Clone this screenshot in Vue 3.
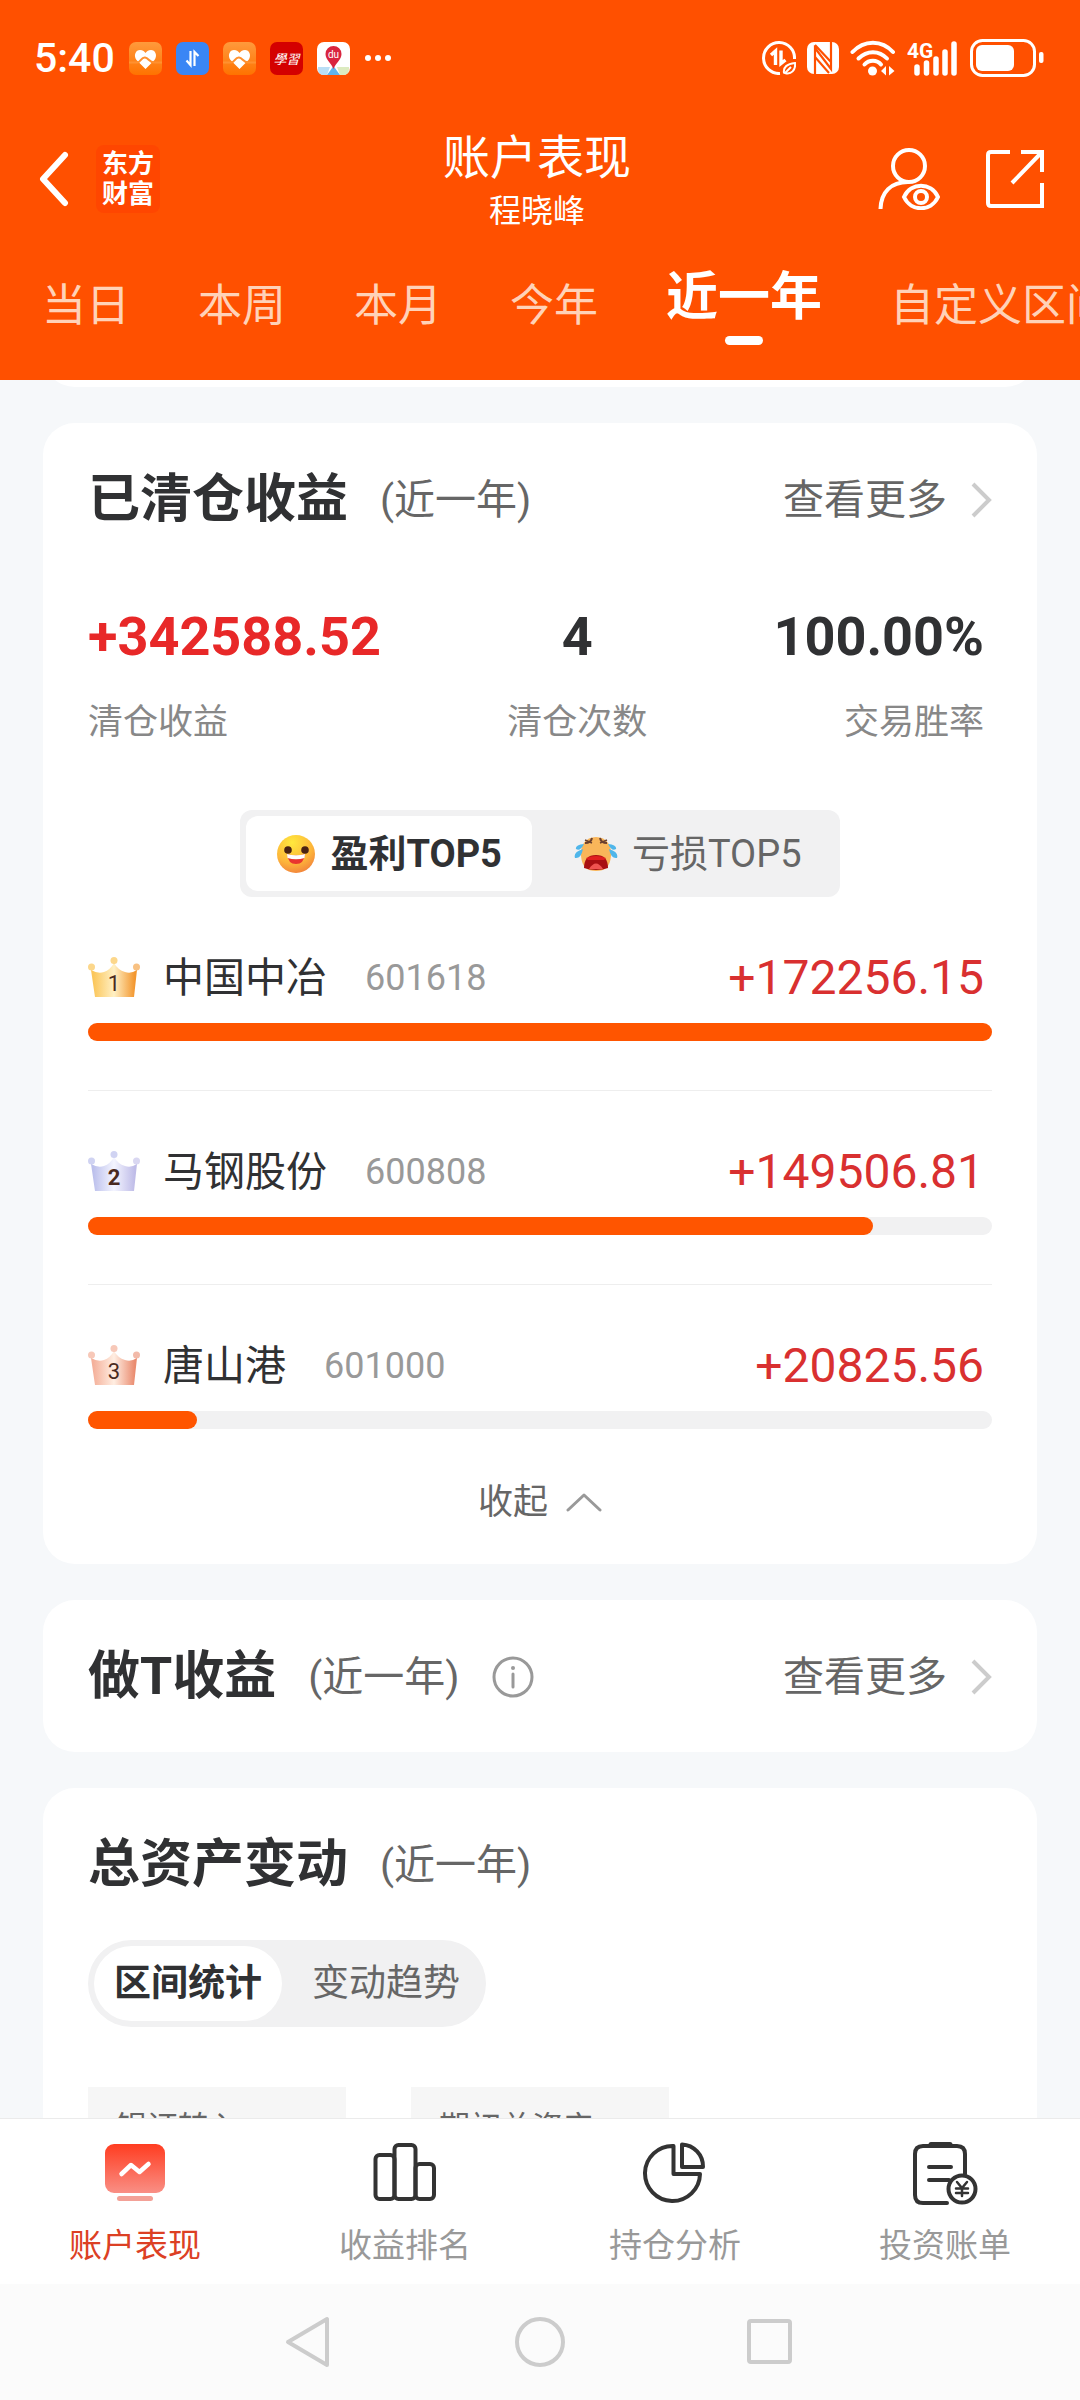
<script setup>

import {computed, ref} from "vue";

const ranges = ["当日", "本周", "本月", "今年", "近一年", "自定义区间"];
const currentRange = ref(4); // Index

const topTab = ref("win"); // win or lose
const assetTab = ref("stat"); // stat or trend

const summary = [
  {label: "清仓收益", value: "+342588.52", type: "up"},
  {label: "清仓次数", value: "4", type: ""},
  {label: "交易胜率", value: "100.00%", type: ""},
]

const stocks = [
  {
    name: "中国中冶",
    code: "601618",
    profit: 172256.15,
    colors: ["#fbc65a", "#fff0c4", "#f3972f"],
    bold: false,
  },
  {
    name: "马钢股份",
    code: "600808",
    profit: 149506.81,
    colors: ["#bcc0ec", "#f4f5ff", "#bfbce8"],
    bold: true,
  },
  {
    name: "唐山港",
    code: "601000",
    profit: 20825.56,
    colors: ["#f4b09a", "#ffeee2", "#ea8c70"],
    bold: false,
  },
]

// Bars are drawn relative to the best stock
const maxProfit = computed(() => Math.max(...stocks.map((s) => s.profit)));

const barWidth = (profit) => (profit / maxProfit.value * 100).toFixed(2) + "%";

const assets = ["银证转入", "期初总资产"];

const pages = ["账户表现", "收益排名", "持仓分析", "投资账单"];
const currentPage = ref(0);

</script>

<template>
  <div class="app">
    <header class="header">
      <!-- Phone status bar -->
      <div class="status">
        <div class="status-left">
          <span class="clock">5:40</span>
          <svg class="app-icon" viewBox="0 0 33 33">
            <defs>
              <linearGradient id="health" x1="0" y1="0" x2="0" y2="1">
                <stop offset="0" stop-color="#ff9a3c"/>
                <stop offset="1" stop-color="#ff7200"/>
              </linearGradient>
            </defs>
            <rect width="33" height="33" rx="7" fill="url(#health)"/>
            <path d="M16.500 27 L7.500 18 C4 13 7 8 11 8 C14 8 15.500 9.500 16.500 11 C17.500 9.500 19 8 22 8 C26 8 29 13 25.500 18 Z" fill="#fff"/>
            <path d="M0 20.500 H8 C12 20.500 12 15 16 15.500 C20 16 20 21 26 20.500 H33" fill="none" stroke="#ff9130" stroke-width="2"/>
          </svg>
          <svg class="app-icon" viewBox="0 0 33 33">
            <rect width="33" height="33" rx="7" fill="#3a86f5"/>
            <path d="M14.500 9 V23 L10.500 18.500 M18.500 24 V10 L22.500 14" fill="none" stroke="#fff" stroke-width="2.200"/>
          </svg>
          <svg class="app-icon" viewBox="0 0 33 33">
            <rect width="33" height="33" rx="7" fill="url(#health)"/>
            <path d="M16.500 27 L7.500 18 C4 13 7 8 11 8 C14 8 15.500 9.500 16.500 11 C17.500 9.500 19 8 22 8 C26 8 29 13 25.500 18 Z" fill="#fff"/>
            <path d="M0 20.500 H8 C12 20.500 12 15 16 15.500 C20 16 20 21 26 20.500 H33" fill="none" stroke="#ff9130" stroke-width="2"/>
          </svg>
          <svg class="app-icon" viewBox="0 0 33 33">
            <rect width="33" height="33" rx="7" fill="#d40000"/>
            <text x="16.500" y="21.500" text-anchor="middle" class="study">學習</text>
          </svg>
          <svg class="app-icon" viewBox="0 0 33 33">
            <rect width="33" height="33" rx="7" fill="#fff"/>
            <path d="M1 25 H13 L10 33 H7 Q1 33 1 27 Z" fill="#b9def5"/>
            <path d="M20 25 H32 V27 Q32 33 26 33 H23 Z" fill="#dcebc0"/>
            <path d="M16.500 24 L23 33 H10 Z" fill="#5fb4ee"/>
            <path d="M16.500 27 C14.500 21 8.500 18 8.500 12 A8 8 0 0 1 24.500 12 C24.500 18 18.500 21 16.500 27 Z" fill="#d9253f"/>
            <text x="16.500" y="16" text-anchor="middle" class="du">du</text>
          </svg>
          <svg class="dots" viewBox="0 0 28 8">
            <circle cx="4" cy="4" r="3" fill="#fff"/>
            <circle cx="14" cy="4" r="3" fill="#fff"/>
            <circle cx="24" cy="4" r="3" fill="#fff"/>
          </svg>
        </div>
        <div class="status-right">
          <svg width="34" height="34" viewBox="0 0 34 34" fill="none" stroke="#fff">
            <path d="M18 32.500 A15.500 15.500 0 1 1 32.500 18" stroke-width="3"/>
            <path d="M9 14 L13.500 10 V24 M19 9.500 V22.500 L23.500 19" stroke-width="3.400"/>
            <path d="M22 32 C21 26 25 23 33 22 C34 29 29 34 23 32 L29 26" stroke-width="2"/>
          </svg>
          <svg width="32" height="32" viewBox="0 0 32 32">
            <rect width="32" height="32" rx="7" fill="#fff"/>
            <path d="M8 32 V6 L24 27 V0 M8 3 L24 20" fill="none" stroke="#ff5000" stroke-width="2.200"/>
            <path d="M8 15 L22 31" fill="none" stroke="#ff5000" stroke-width="2"/>
          </svg>
          <svg width="46" height="36" viewBox="0 0 46 36" fill="none" stroke="#fff" stroke-width="4" stroke-linecap="round">
            <path d="M2.500 12 C14 -0.500 32 -0.500 43 12"/>
            <path d="M8.500 18.500 C17 10 29 10 37 18.500"/>
            <path d="M14.500 24.500 C19 19.500 27 19.500 31 24.500"/>
            <circle cx="22.500" cy="31" r="4.500" fill="#fff" stroke="none"/>
            <path d="M31 31 L36 26 V35.500 Z M44.500 31 L39 26 V35.500 Z" fill="#fff" stroke="none"/>
          </svg>
          <svg width="52" height="36" viewBox="0 0 52 36">
            <text x="0" y="18" class="net">4G</text>
            <path d="M10 27 V33 M19.500 23 V33 M29 19 V33 M38 12 V33 M47 4 V33" stroke="#fff" stroke-width="5.500" stroke-linecap="round"/>
          </svg>
          <svg width="74" height="38" viewBox="0 0 74 38">
            <rect x="1.500" y="1.500" width="63" height="35" rx="11" fill="none" stroke="#fff" stroke-width="3"/>
            <rect x="6" y="6" width="38" height="26" rx="6" fill="#fff"/>
            <rect x="69" y="13" width="4.500" height="11" rx="2" fill="#fff"/>
          </svg>
        </div>
      </div>

      <!-- Title -->
      <div class="title-bar">
        <div class="title-left">
          <button class="icon-btn" aria-label="返回">
            <svg width="40" height="56" viewBox="0 0 40 56">
              <path d="M35 4 L13 28 L35 52" fill="none" stroke="#fff" stroke-width="6" stroke-linecap="round" stroke-linejoin="round"/>
            </svg>
          </button>
          <div class="logo">东方<br>财富</div>
        </div>
        <div class="title-center">
          <h1>账户表现</h1>
          <p>程晓峰</p>
        </div>
        <div class="title-right">
          <button class="icon-btn" aria-label="账户">
            <svg width="62" height="62" viewBox="0 0 62 62" fill="none" stroke="#fff" stroke-width="4">
              <circle cx="31" cy="18" r="16"/>
              <path d="M2.500 61 C3 44 13 34 30 34"/>
              <path d="M26 49 C33 34 53 34 60 49 C53 64 33 64 26 49 Z"/>
              <circle cx="43" cy="49" r="6"/>
            </svg>
          </button>
          <button class="icon-btn" aria-label="分享">
            <svg width="58" height="60" viewBox="0 0 58 60" fill="none" stroke="#fff" stroke-width="4">
              <path d="M24 3 H5 Q2 3 2 6 V54 Q2 57 5 57 H56 V34"/>
              <path d="M35 3 H56 V23 M55 4 L26 34"/>
            </svg>
          </button>
        </div>
      </div>

      <!-- Ranges -->
      <nav class="ranges">
        <button
            v-for="(range, index) in ranges"
            :key="range"
            :class="['range', {active: index === currentRange}]"
            @click="currentRange = index"
        >
          {{ range }}
        </button>
      </nav>
    </header>

    <main class="content">
      <div class="card previous"></div>

      <!-- Closed positions -->
      <section class="card closed">
        <div class="card-head">
          <h2>已清仓收益</h2>
          <span class="period">(近一年)</span>
          <a href="#" class="more">
            查看更多
            <svg width="22" height="36" viewBox="0 0 22 36">
              <path d="M3 2 L19 18 L3 34" fill="none" stroke="#ccc" stroke-width="4"/>
            </svg>
          </a>
        </div>

        <div class="summary">
          <div v-for="item in summary" :key="item.label" class="summary-item">
            <strong :class="item.type">{{ item.value }}</strong>
            <span>{{ item.label }}</span>
          </div>
        </div>

        <div class="switch">
          <button :class="{active: topTab === 'win'}" @click="topTab = 'win'">
            <svg width="40" height="40" viewBox="0 0 40 40">
              <defs>
                <radialGradient id="smile" cx="0.4" cy="0.2" r="0.9">
                  <stop offset="0" stop-color="#ffe83d"/>
                  <stop offset="0.600" stop-color="#fdb53a"/>
                  <stop offset="1" stop-color="#f0783c"/>
                </radialGradient>
              </defs>
              <circle cx="20" cy="20" r="19" fill="url(#smile)"/>
              <circle cx="12" cy="16" r="3.800" fill="#4a2212"/>
              <circle cx="29" cy="16" r="3.800" fill="#4a2212"/>
              <path d="M11 20 Q20 22.500 29 20 Q28 30 20 30 Q12 30 11 20 Z" fill="#e9352f"/>
              <path d="M11 20 Q20 22.500 29 20 L28.500 24 Q20 26.500 11.500 24 Z" fill="#fff"/>
            </svg>
            盈利TOP5
          </button>
          <button :class="{active: topTab === 'lose'}" @click="topTab = 'lose'">
            <svg width="44" height="40" viewBox="0 0 44 40">
              <path d="M22 3 C33 3 38 12 37 22 C36 33 31 37 22 37 C13 37 8 33 7 22 C6 12 11 3 22 3 Z" fill="#f9b65a"/>
              <path d="M11 9 Q17 9 18 4 M33 9 Q27 9 26 4" fill="none" stroke="#6b4030" stroke-width="2"/>
              <path d="M11 6 L18 9 M33 6 L26 9" stroke="#6b4030" stroke-width="1.500"/>
              <path d="M10 34 Q10 21 22 21 Q34 21 34 34 Q29 36 22 36 Q15 36 10 34 Z" fill="#a80f12"/>
              <path d="M12 24 Q22 20 32 24 L30 26 H14 Z" fill="#e01f1f"/>
              <path d="M15 35 Q22 24 29 35 Z" fill="#ef5350"/>
              <path d="M10 10 Q1 11 2 15 Q6 18 10 10 Z M9 15 Q-1 18 1 24 Q7 25 9 15 Z" fill="#4fb6ea"/>
              <path d="M34 10 Q43 11 42 15 Q38 18 34 10 Z M35 15 Q45 18 43 24 Q37 25 35 15 Z" fill="#4fb6ea"/>
            </svg>
            亏损TOP5
          </button>
        </div>

        <ul class="stocks">
          <li v-for="(stock, index) in stocks" :key="stock.code" class="stock">
            <div class="stock-info">
              <svg width="52" height="42" viewBox="0 0 52 42">
                <defs>
                  <linearGradient :id="'crown-' + index" x1="0" y1="0" x2="1" y2="0">
                    <stop offset="0.050" :stop-color="stock.colors[0]"/>
                    <stop offset="0.500" :stop-color="stock.colors[1]"/>
                    <stop offset="0.950" :stop-color="stock.colors[2]"/>
                  </linearGradient>
                </defs>
                <path d="M3 13 Q10 17 16 15 Q22 13 26 6 Q30 13 37 15 Q43 17 49 13 L46 40 H7 Z" :fill="`url(#crown-${index})`"/>
                <circle cx="3.500" cy="10" r="3.500" :fill="stock.colors[0]" opacity="0.700"/>
                <circle cx="26" cy="3.500" r="3.500" :fill="stock.colors[0]" opacity="0.700"/>
                <circle cx="48.500" cy="10" r="3.500" :fill="stock.colors[2]" opacity="0.600"/>
                <text x="26" y="34" text-anchor="middle" :class="['rank', {bold: stock.bold}]">{{ index + 1 }}</text>
              </svg>
              <span class="name">{{ stock.name }}</span>
              <span class="code">{{ stock.code }}</span>
              <span class="profit">+{{ stock.profit.toFixed(2) }}</span>
            </div>
            <div class="track">
              <div class="bar" :style="{width: barWidth(stock.profit)}"></div>
            </div>
          </li>
        </ul>

        <button class="collapse">
          收起
          <svg width="36" height="20" viewBox="0 0 36 20">
            <path d="M2 17 L18 2 L34 17" fill="none" stroke="#999" stroke-width="3" stroke-linecap="round" stroke-linejoin="round"/>
          </svg>
        </button>
      </section>

      <!-- Day trading -->
      <section class="card">
        <div class="card-head">
          <h2>做T收益</h2>
          <span class="period">(近一年)</span>
          <button class="icon-btn" aria-label="说明">
            <svg width="42" height="42" viewBox="0 0 42 42">
              <circle cx="21" cy="21" r="19" fill="none" stroke="#999" stroke-width="3"/>
              <circle cx="21" cy="12" r="2" fill="#999"/>
              <path d="M21 18 V31" stroke="#999" stroke-width="3" stroke-linecap="round"/>
            </svg>
          </button>
          <a href="#" class="more">
            查看更多
            <svg width="22" height="36" viewBox="0 0 22 36">
              <path d="M3 2 L19 18 L3 34" fill="none" stroke="#ccc" stroke-width="4"/>
            </svg>
          </a>
        </div>
      </section>

      <!-- Total assets -->
      <section class="card">
        <div class="card-head">
          <h2>总资产变动</h2>
          <span class="period">(近一年)</span>
        </div>
        <div class="switch round">
          <button :class="{active: assetTab === 'stat'}" @click="assetTab = 'stat'">区间统计</button>
          <button :class="{active: assetTab === 'trend'}" @click="assetTab = 'trend'">变动趋势</button>
        </div>
        <div class="boxes">
          <div v-for="asset in assets" :key="asset" class="box">{{ asset }}</div>
        </div>
      </section>
    </main>

    <!-- Pages -->
    <nav class="pages">
      <button
          v-for="(page, index) in pages"
          :key="page"
          :class="{active: index === currentPage}"
          @click="currentPage = index"
      >
        <svg v-if="index === 0" width="64" height="64" viewBox="0 0 64 64">
          <defs>
            <linearGradient id="screen" x1="0" y1="0" x2="0" y2="1">
              <stop offset="0" stop-color="#ff3c20"/>
              <stop offset="1" stop-color="#f98f85"/>
            </linearGradient>
          </defs>
          <rect x="2" y="3" width="60" height="49" rx="9" fill="url(#screen)"/>
          <rect x="14" y="55" width="36" height="5" rx="2.500" fill="#f3a197"/>
          <path d="M18.500 33 L28 24 L36.500 31 L45.500 23" fill="none" stroke="#fff" stroke-width="4.500" stroke-linecap="round" stroke-linejoin="round"/>
        </svg>
        <svg v-if="index === 1" width="64" height="64" viewBox="0 0 64 64" fill="none" stroke="#333" stroke-width="4">
          <rect x="2.500" y="14" width="19" height="44" rx="4"/>
          <rect x="21.500" y="4" width="21" height="54" rx="4"/>
          <rect x="42.500" y="23" width="18.500" height="35" rx="4"/>
        </svg>
        <svg v-if="index === 2" width="64" height="64" viewBox="0 0 64 64" fill="none" stroke="#333" stroke-width="4" stroke-linejoin="round">
          <path d="M30.500 5 A27.500 27.500 0 1 0 57 33 H30.500 Z"/>
          <path d="M39 3.500 A22 22 0 0 1 60 26 H39 Z"/>
        </svg>
        <svg v-if="index === 3" width="68" height="64" viewBox="0 0 68 64" fill="none" stroke="#333" stroke-width="4" stroke-linecap="round">
          <path d="M36 62 H12 Q4 62 4 54 V13 Q4 5 12 5 H46 Q54 5 54 13 V33"/>
          <path d="M20 3.500 H39" stroke-width="5"/>
          <path d="M18 26 H40 M18 39 H38"/>
          <circle cx="51" cy="48" r="13.500"/>
          <path d="M46 41 L51 47 L56 41 M51 47 V55 M45 47.500 H57 M45 52 H57" stroke-width="2.500"/>
        </svg>
        <span>{{ page }}</span>
      </button>
    </nav>

    <!-- Phone navigation -->
    <div class="system">
      <button class="icon-btn" aria-label="后退">
        <svg width="50" height="52" viewBox="0 0 50 52">
          <path d="M42 3 V49 L3 26 Z" fill="none" stroke="#ccc" stroke-width="4" stroke-linejoin="round"/>
        </svg>
      </button>
      <button class="icon-btn" aria-label="主屏幕">
        <svg width="50" height="52" viewBox="0 0 50 52">
          <circle cx="25" cy="26" r="23" fill="none" stroke="#ccc" stroke-width="4"/>
        </svg>
      </button>
      <button class="icon-btn" aria-label="最近任务">
        <svg width="50" height="52" viewBox="0 0 50 52">
          <rect x="4" y="5" width="41" height="41" rx="2" fill="none" stroke="#ccc" stroke-width="4"/>
        </svg>
      </button>
    </div>
  </div>
</template>

<style>
body {
  margin: 0;
  background: #f6f8fa;
}
</style>

<style scoped>
.app {
  display: flex;
  flex-direction: column;
  height: 100vh;
  color: #303133;
  font-family: Roboto, "Noto Sans CJK SC", sans-serif;
}

h1, h2, p, ul {
  margin: 0;
  padding: 0;
}

button {
  padding: 0;
  border: none;
  background: none;
  color: inherit;
  font-family: inherit;
  cursor: pointer;
}

svg {
  display: block;
  flex: none;
}

.icon-btn {
  display: flex;
}

/* Header */
.header {
  flex: none;
  background: #ff5000;
  color: #fff;
}

.status {
  display: flex;
  justify-content: space-between;
  align-items: center;
  height: 116px;
  padding: 0 36px 0 34px;
}

.status-left {
  display: flex;
  align-items: center;
  gap: 14px;
}

.status-right {
  display: flex;
  align-items: center;
  gap: 11px;
}

.clock {
  font-size: 41px;
  font-weight: 500;
  line-height: 48px;
}

.app-icon {
  width: 33px;
  height: 33px;
}

.study {
  fill: #fff;
  font-size: 13px;
  font-style: italic;
}

.du {
  fill: #fff;
  font-size: 10px;
}

.dots {
  width: 28px;
}

.net {
  fill: #fff;
  font-size: 21px;
  font-weight: 700;
}

.title-bar {
  display: grid;
  grid-template-columns: 1fr auto 1fr;
  align-items: center;
  height: 126px;
  padding: 0 36px 0 30px;
}

.title-left {
  display: flex;
  align-items: center;
  gap: 26px;
}

.logo {
  padding: 4px 6px;
  border-radius: 8px;
  background: #ff4600;
  font-size: 26px;
  font-weight: 700;
  line-height: 30px;
}

.title-center {
  display: flex;
  flex-direction: column;
  gap: 6px;
  text-align: center;
}

.title-center h1 {
  font-size: 47px;
  font-weight: 400;
  line-height: 58px;
}

.title-center p {
  font-size: 32px;
  line-height: 36px;
}

.title-right {
  display: flex;
  justify-content: flex-end;
  align-items: center;
  gap: 46px;
}

.ranges {
  display: flex;
  align-items: flex-start;
  gap: 68px;
  height: 112px;
  padding: 26px 0 0 42px;
  overflow: hidden;
}

.range {
  flex: none;
  padding-top: 8px;
  color: #ffd2b8;
  font-size: 44px;
  line-height: 60px;
}

.range.active {
  padding-top: 0;
  color: #fff;
  font-size: 52px;
  font-weight: 700;
}

.range.active::after {
  content: "";
  display: block;
  width: 38px;
  height: 9px;
  margin: 8px auto 0;
  border-radius: 5px;
  background: #fff;
}

/* Content */
.content {
  display: flex;
  flex-direction: column;
  flex: 1;
  gap: 36px;
  min-height: 0;
  padding: 0 43px;
  overflow: hidden;
  background: #f6f8fa;
}

.card {
  flex: none;
  padding: 0 45px;
  border-radius: 32px;
  background: #fff;
}

.previous {
  height: 80px;
  margin-top: -73px;
}

.card-head {
  display: flex;
  align-items: center;
  gap: 32px;
  padding: 47px 0 45px;
  line-height: 60px;
}

.card-head h2 {
  font-size: 52px;
}

.period {
  color: #666;
  font-size: 41px;
}

.more {
  display: flex;
  align-items: center;
  gap: 23px;
  margin-left: auto;
  color: #666;
  font-size: 41px;
  text-decoration: none;
}

.closed {
  padding-bottom: 36px;
}

.summary {
  display: flex;
  justify-content: space-between;
  margin: 32px 8px 65px 0;
}

.summary-item {
  display: flex;
  flex-direction: column;
  align-items: center;
  gap: 34px;
}

.summary-item:first-child {
  align-items: flex-start;
}

.summary-item:last-child {
  align-items: flex-end;
}

.summary-item strong {
  font-size: 54px;
  line-height: 60px;
}

.summary-item .up {
  color: #e82828;
}

.summary-item span {
  color: #888;
  font-size: 35px;
  line-height: 44px;
}

.switch {
  display: flex;
  gap: 10px;
  width: fit-content;
  margin: 0 auto;
  padding: 6px;
  border-radius: 12px;
  background: #f1f1f2;
}

.switch button {
  display: flex;
  align-items: center;
  gap: 14px;
  height: 75px;
  padding: 0 32px;
  border-radius: 12px;
  color: #666;
  font-size: 38px;
  line-height: 44px;
}

.switch .active {
  padding: 0 30px;
  background: #fff;
  color: #303133;
  font-weight: 700;
}

.switch.round {
  margin: 0;
  border-radius: 44px;
}

.switch.round button {
  padding: 0 20px;
  border-radius: 38px;
  font-size: 37px;
}

.stocks {
  list-style: none;
}

.stock {
  padding: 53px 0 49px;
  border-bottom: 1px solid #eee;
}

.stock:last-child {
  border-bottom: none;
}

.stock-info {
  display: flex;
  align-items: center;
  margin-bottom: 17px;
  padding-right: 8px;
  line-height: 56px;
}

.rank {
  fill: #4a2a20;
  font-size: 22px;
}

.rank.bold {
  font-weight: 700;
}

.name {
  margin: 0 38px 0 23px;
  font-size: 41px;
}

.code {
  color: #999;
  font-size: 36px;
}

.profit {
  margin-left: auto;
  color: #d93030;
  font-size: 48px;
}

.track {
  height: 18px;
  border-radius: 9px;
  background: #f1f1f2;
}

.bar {
  height: 100%;
  border-radius: 9px;
  background: #ff5500;
}

.collapse {
  display: flex;
  align-items: center;
  gap: 18px;
  margin: 0 auto;
  color: #666;
  font-size: 35px;
  line-height: 50px;
}

.boxes {
  display: flex;
  gap: 65px;
  margin-top: 60px;
}

.box {
  width: 202px;
  padding: 21px 28px;
  background: #f6f6f6;
  color: #666;
  font-size: 31px;
  line-height: 40px;
}

/* Bottom bars */
.pages {
  display: flex;
  flex: none;
  border-top: 1px solid #ebebeb;
  background: #fff;
}

.pages button {
  display: flex;
  flex: 1;
  flex-direction: column;
  align-items: center;
  gap: 20px;
  padding: 22px 0 17px;
  color: #999;
  font-size: 33px;
  line-height: 42px;
}

.pages .active {
  color: #dc4024;
}

.system {
  display: flex;
  flex: none;
  justify-content: center;
  align-items: center;
  gap: 180px;
  height: 116px;
  background: #fbfbfb;
}
</style>
